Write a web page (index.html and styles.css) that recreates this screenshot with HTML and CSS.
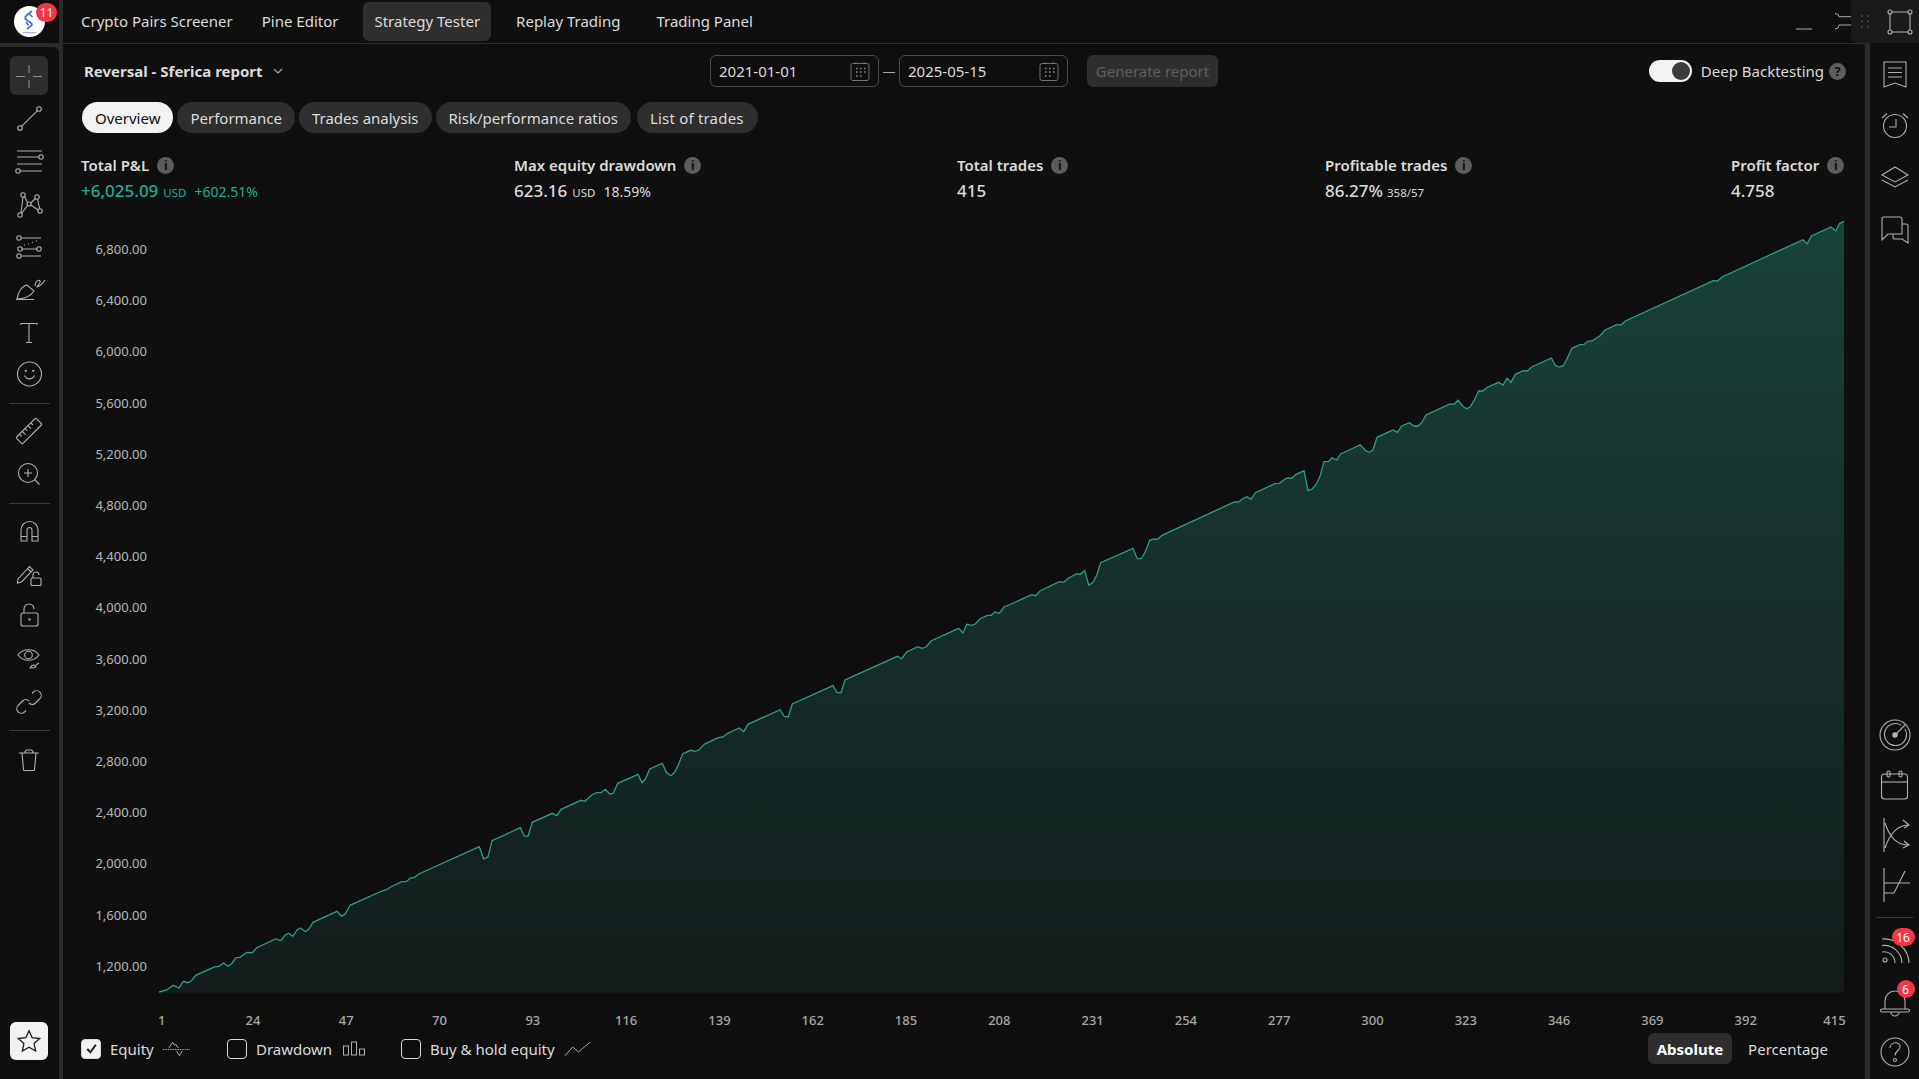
FILE: index.html
```html
<!DOCTYPE html>
<html lang="en">
<head>
  <meta charset="UTF-8" />
  <title>Strategy Tester</title>
  <link rel="stylesheet" href="styles.css">
</head>
<body>
<div class="app">

  <!-- Left drawing tools -->
  <aside class="left-col">
    <div class="logo-box">
      <svg class="logo" viewBox="0 0 31 31">
        <circle cx="15.5" cy="15.5" r="15.5" fill="#fff"/>
        <path d="M18 5 L12 10 Q10.500 12 12 13.500 L17 17 Q18.500 18.500 17 20 L13 23" fill="none" stroke="#4a7fd0" stroke-width="2"/>
        <path d="M15 7.500 L18.500 11 M12 16 L14.500 19.500" fill="none" stroke="#7b4fc4" stroke-width="1.500"/>
        <rect x="9" y="26" width="13" height="1.200" fill="#9fb0e6"/>
      </svg>
      <span class="count-badge logo-badge">11</span>
    </div>
    <nav class="tools">
      <button class="tool tool-active"><svg class="ico" viewBox="0 0 28 28"><path d="M14 3v8M14 18v8M1 14.500h9M18 14.500h9"/></svg></button>
      <button class="tool"><svg class="ico" viewBox="0 0 28 28"><circle cx="5" cy="24" r="2.300"/><circle cx="24" cy="5" r="2.300"/><path d="M6.800 22.200 22.200 6.800"/></svg></button>
      <button class="tool"><svg class="ico" viewBox="0 0 28 28"><path d="M2 4h25M2 10h22M2 17h25M5 24h22"/><circle cx="26" cy="10" r="2.200"/><circle cx="3" cy="24" r="2.200"/></svg></button>
      <button class="tool"><svg class="ico" viewBox="0 0 28 28"><circle cx="8" cy="5" r="2.200"/><circle cx="22" cy="7" r="2.200"/><circle cx="5" cy="25" r="2.200"/><circle cx="25" cy="21" r="2.200"/><circle cx="14" cy="14" r="2"/><path d="M8 7 6 23M6.500 23.500 12.500 15.500M9.500 6.500 12.500 12.500M15.800 13 20.500 8.500M22.500 9 24.700 19M15.800 15 23.300 20"/></svg></button>
      <button class="tool"><svg class="ico" viewBox="0 0 28 28"><circle cx="4" cy="6" r="2.200"/><circle cx="5" cy="17" r="2.200"/><circle cx="24" cy="17" r="2.200"/><circle cx="4" cy="24" r="2.200"/><path d="M6.500 6H26M7 17h15M6.500 24H26"/><path d="M9 13l1-.3M13 12l1-.3M17 10.500l1-.3M21 9l1-.3"/></svg></button>
      <button class="tool"><svg class="ico" viewBox="0 0 28 28"><path d="M2 24C3 17 7 11 12 10l7 6c-3 5-10 8-17 8zM1 24.500h18"/><path d="M20 11c0-5 4-7 5-5 1 2-3 5-3 6 4-1 6-4 8-7"/></svg></button>
      <button class="tool"><svg class="ico" viewBox="0 0 28 28"><path d="M6 7V5.500h16V7M14 5.500v19M11 24.500h6"/></svg></button>
      <button class="tool"><svg class="ico" viewBox="0 0 28 28"><circle cx="14.500" cy="14" r="12"/><path d="M9.500 15.500c2 4.500 8 4.500 10 0"/><circle cx="10.800" cy="10.800" r=".6"/><circle cx="18.200" cy="10.800" r=".6"/></svg></button>
      <hr class="tool-sep">
      <button class="tool"><svg class="ico" viewBox="0 0 28 28"><g transform="rotate(-45 14 14)"><rect x="0" y="9.500" width="28" height="9" rx="1"/><path d="M5 9.500v3M9 9.500v4.500M13 9.500v3M17 9.500v4.500M21 9.500v3"/></g></svg></button>
      <button class="tool"><svg class="ico" viewBox="0 0 28 28"><circle cx="13" cy="13" r="9.500"/><path d="M20 20l4.500 4.500M13 9v8M9 13h8"/></svg></button>
      <hr class="tool-sep">
      <button class="tool"><svg class="ico" viewBox="0 0 28 28"><path d="M6 24V13a8.500 8.500 0 0 1 17 0v11h-6V13a2.500 2.500 0 0 0-5 0v11zM6 19.500h6M17 19.500h6"/></svg></button>
      <button class="tool"><svg class="ico" viewBox="0 0 28 28"><path d="M3 19l-.5 4 4-1L18 10l-3.500-3.500zM12.500 8.500 16 12"/><rect x="16" y="18" width="10" height="7.500" rx="1"/><path d="M18 18v-3a3 3 0 0 1 6 0"/></svg></button>
      <button class="tool"><svg class="ico" viewBox="0 0 28 28"><rect x="6" y="11" width="17" height="13" rx="2"/><path d="M9 11V7a5 5 0 0 1 10 0"/><path d="M14.500 16.500v2" stroke-width="2"/></svg></button>
      <button class="tool"><svg class="ico" viewBox="0 0 28 28"><path d="M3 10c5-7 16-7 21 0-5 7-16 7-21 0z"/><circle cx="13.500" cy="10" r="3.800"/><path d="M15 23c1-2 2-3 4-3l2 1.500c-1 1.500-3 1.500-6 1.500zM21 20l3-2"/></svg></button>
      <button class="tool"><svg class="ico" viewBox="0 0 28 28"><path d="M17 5.500l1.500-1.500a4.600 4.600 0 0 1 6.500 6.500l-4.500 4.500a4.600 4.600 0 0 1-6.500 0"/><path d="M11 22.500l-1.500 1.500a4.600 4.600 0 0 1-6.500-6.500l4.500-4.500a4.600 4.600 0 0 1 6.500 0"/></svg></button>
      <hr class="tool-sep tool-sep-low">
      <button class="tool"><svg class="ico" viewBox="0 0 28 28"><path d="M4 6h20M7 6l1.500 16.500a1 1 0 0 0 1 1h9a1 1 0 0 0 1-1L21 6M10 6q0-3 2-3h4q2 0 2 3"/></svg></button>
      <button class="star-btn"><svg class="star" viewBox="0 0 24 24"><path d="M12 2.500l2.900 6.400 7 .8-5.200 4.700 1.400 6.900-6.100-3.500-6.100 3.500 1.400-6.900L2.100 9.700l7-.8z"/></svg></button>
    </nav>
  </aside>
  <div class="gutter"></div>

  <!-- Strategy tester panel -->
  <main class="main">
    <header class="topbar">
      <a class="tab tab-screener">Crypto Pairs Screener</a>
      <a class="tab">Pine Editor</a>
      <a class="tab tab-current">Strategy Tester</a>
      <a class="tab tab-replay">Replay Trading</a>
      <a class="tab tab-panel">Trading Panel</a>
      <svg class="win-min" viewBox="0 0 60 20"><path d="M1 18h16M40 2.500q4 0 4 3.200h14M58 14H44q0 4-4 4"/></svg>
    </header>

    <div class="content">
      <div class="report-head">
        <div class="report-title">Reversal - Sferica report <svg class="chev" viewBox="0 0 10 6"><path d="M1 1l4 4 4-4"/></svg></div>
        <label class="date-box">2021-01-01
          <svg class="cal" viewBox="0 0 20 20"><rect x="1" y="2.500" width="18" height="17" rx="2"/><path d="M6 1v2M14 1v2"/><path class="cal-dots" d="M6 7.500h1.500M10 7.500h1.500M14 7.500h1.500M6 11h1.500M10 11h1.500M14 11h1.500M6 15h1.500M10 15h1.500"/></svg>
        </label>
        <span class="dash">—</span>
        <label class="date-box">2025-05-15
          <svg class="cal" viewBox="0 0 20 20"><rect x="1" y="2.500" width="18" height="17" rx="2"/><path d="M6 1v2M14 1v2"/><path class="cal-dots" d="M6 7.500h1.500M10 7.500h1.500M14 7.500h1.500M6 11h1.500M10 11h1.500M14 11h1.500M6 15h1.500M10 15h1.500"/></svg>
        </label>
        <button class="gen-btn">Generate report</button>
        <div class="deep">
          <span class="toggle"><span class="knob"></span></span>
          <span>Deep Backtesting</span>
          <span class="hint">?</span>
        </div>
      </div>

      <div class="pills">
        <span class="pill pill-on">Overview</span>
        <span class="pill">Performance</span>
        <span class="pill">Trades analysis</span>
        <span class="pill">Risk/performance ratios</span>
        <span class="pill pill-last">List of trades</span>
      </div>

      <div class="stats">
        <div>
          <div class="stat-label">Total P&amp;L <span class="hint">i</span></div>
          <div class="stat-value green">+6,025.09 <small>USD</small> <em>+602.51%</em></div>
        </div>
        <div>
          <div class="stat-label">Max equity drawdown <span class="hint">i</span></div>
          <div class="stat-value">623.16 <small>USD</small> <em>18.59%</em></div>
        </div>
        <div>
          <div class="stat-label">Total trades <span class="hint">i</span></div>
          <div class="stat-value">415</div>
        </div>
        <div>
          <div class="stat-label">Profitable trades <span class="hint">i</span></div>
          <div class="stat-value">86.27% <small class="ratio">358/57</small></div>
        </div>
        <div>
          <div class="stat-label">Profit factor <span class="hint">i</span></div>
          <div class="stat-value">4.758</div>
        </div>
      </div>

      <div class="chart">
        <div class="y-axis">
          <span>6,800.00</span><span>6,400.00</span><span>6,000.00</span><span>5,600.00</span><span>5,200.00</span>
          <span>4,800.00</span><span>4,400.00</span><span>4,000.00</span><span>3,600.00</span><span>3,200.00</span>
          <span>2,800.00</span><span>2,400.00</span><span>2,000.00</span><span>1,600.00</span><span>1,200.00</span>
        </div>
        <svg class="plot" viewBox="159 215 1685 778">
          <defs>
            <linearGradient id="area" gradientUnits="userSpaceOnUse" x1="0" y1="220" x2="0" y2="993">
              <stop offset="0" stop-color="#184239"/>
              <stop offset="1" stop-color="#131c1b"/>
            </linearGradient>
          </defs>
          <path fill="url(#area)" d="M159 992 166.700 990 173.300 985.300 179 988 183.300 981.300 187.700 982.700 191 981.300 195.700 975.300 215 966.700 219 966.300 223.700 963 228 966.300 231.700 963.700 236 957.700 240 957.300 246.700 952.300 252.300 952.700 256.700 947.700 275.700 939 280.700 940.700 285 935.300 288.700 933.300 292.700 936.300 297.300 929.700 300.700 928 305.300 931.700 308.700 929.300 313 922.300 337 911.300 341.700 916.300 345.300 913.700 350 905.300 381.700 891 386 890 391 886.700 401.700 881.700 406.300 881.700 410.300 878 414.300 877.300 419.300 873.700 479.300 846.700 483.700 859 488 856.700 492 840.700 520.300 827.700 524.300 836 528 836.300 532.300 822.300 552.300 813.300 557 815.700 561 809.300 581 800.300 585 801.300 592 794.700 596.700 792.700 601 792.700 605.300 789.300 609.700 794 613.300 793.300 617.700 783.300 638 774.300 642 782.700 645.700 778.300 649.700 769 662.300 763.300 666.300 772 670.700 775.700 674.700 772.300 678.300 765 682.700 753.700 690.700 750.300 695 751.300 699 750 704 744.300 718.300 737.700 723 737 727.700 733.300 739.300 728 743.700 731.700 748 724.300 780 709.700 784.300 716.300 788.300 716.700 792.300 704 833 685.700 837 692.700 841 692.700 845 680 897.300 656.300 901.700 658.700 906.700 652 917.700 646.700 922 648.300 926 647 931 641 958.700 628.300 963 633 966.700 624.300 971.700 625.300 975.300 624 980 618.700 987.300 615.300 991 615.300 995 612 999.300 613.300 1004 607 1010 604.500 1031.700 594.700 1035.700 595.700 1040 591 1059.300 581.700 1063.700 582.300 1068.300 578.300 1076.300 574 1080.300 574.300 1084.700 570.700 1088.700 585 1092.700 582.700 1096.700 575.300 1100.700 562.700 1133 548.300 1137.300 558.700 1141.300 558.700 1145.300 551.700 1149.700 540.300 1153.700 539 1157.700 539.300 1162 535.300 1234.300 502 1238.700 502 1242.700 498.700 1247 496.700 1251 499.300 1255.300 492.700 1275 483.700 1279.300 483.300 1284 479.700 1287.300 478 1291.700 478.300 1296 474.300 1304 470.700 1308 490.700 1312 489 1316 484.700 1320 476.300 1324 461.700 1328.300 461.700 1332 457.700 1336.700 460 1340.700 454 1360.300 444.700 1365.300 450.300 1369 452.300 1373 450 1377 437.300 1393 430 1397.300 432.300 1401.700 426 1409.300 422.700 1414 426 1418 426 1422 422.300 1426 415 1450 404 1454 404.300 1458 400.300 1463.300 406.700 1466.700 408.700 1470.300 406.700 1474.300 400 1478.700 391 1482.700 391 1488 387 1498.700 382.300 1503 385 1507 378.300 1511 382.300 1515.300 374.300 1523.300 370.700 1527.300 371 1531.700 367 1551.300 358 1555.700 365.700 1559.300 367 1563.300 365.700 1567.300 358.300 1572 348.300 1580 344.700 1584 344.300 1588 341.300 1592.300 340.700 1600 335.700 1605 330 1616.700 324.700 1621 325 1625.300 321 1713.300 280.700 1717.700 281 1722 277 1803 239.700 1807 244 1811.300 236 1831 227 1835.700 231 1839.700 223.300 1844 221.300V993H159Z"/>
          <path class="equity" d="M159 992 166.700 990 173.300 985.300 179 988 183.300 981.300 187.700 982.700 191 981.300 195.700 975.300 215 966.700 219 966.300 223.700 963 228 966.300 231.700 963.700 236 957.700 240 957.300 246.700 952.300 252.300 952.700 256.700 947.700 275.700 939 280.700 940.700 285 935.300 288.700 933.300 292.700 936.300 297.300 929.700 300.700 928 305.300 931.700 308.700 929.300 313 922.300 337 911.300 341.700 916.300 345.300 913.700 350 905.300 381.700 891 386 890 391 886.700 401.700 881.700 406.300 881.700 410.300 878 414.300 877.300 419.300 873.700 479.300 846.700 483.700 859 488 856.700 492 840.700 520.300 827.700 524.300 836 528 836.300 532.300 822.300 552.300 813.300 557 815.700 561 809.300 581 800.300 585 801.300 592 794.700 596.700 792.700 601 792.700 605.300 789.300 609.700 794 613.300 793.300 617.700 783.300 638 774.300 642 782.700 645.700 778.300 649.700 769 662.300 763.300 666.300 772 670.700 775.700 674.700 772.300 678.300 765 682.700 753.700 690.700 750.300 695 751.300 699 750 704 744.300 718.300 737.700 723 737 727.700 733.300 739.300 728 743.700 731.700 748 724.300 780 709.700 784.300 716.300 788.300 716.700 792.300 704 833 685.700 837 692.700 841 692.700 845 680 897.300 656.300 901.700 658.700 906.700 652 917.700 646.700 922 648.300 926 647 931 641 958.700 628.300 963 633 966.700 624.300 971.700 625.300 975.300 624 980 618.700 987.300 615.300 991 615.300 995 612 999.300 613.300 1004 607 1010 604.500 1031.700 594.700 1035.700 595.700 1040 591 1059.300 581.700 1063.700 582.300 1068.300 578.300 1076.300 574 1080.300 574.300 1084.700 570.700 1088.700 585 1092.700 582.700 1096.700 575.300 1100.700 562.700 1133 548.300 1137.300 558.700 1141.300 558.700 1145.300 551.700 1149.700 540.300 1153.700 539 1157.700 539.300 1162 535.300 1234.300 502 1238.700 502 1242.700 498.700 1247 496.700 1251 499.300 1255.300 492.700 1275 483.700 1279.300 483.300 1284 479.700 1287.300 478 1291.700 478.300 1296 474.300 1304 470.700 1308 490.700 1312 489 1316 484.700 1320 476.300 1324 461.700 1328.300 461.700 1332 457.700 1336.700 460 1340.700 454 1360.300 444.700 1365.300 450.300 1369 452.300 1373 450 1377 437.300 1393 430 1397.300 432.300 1401.700 426 1409.300 422.700 1414 426 1418 426 1422 422.300 1426 415 1450 404 1454 404.300 1458 400.300 1463.300 406.700 1466.700 408.700 1470.300 406.700 1474.300 400 1478.700 391 1482.700 391 1488 387 1498.700 382.300 1503 385 1507 378.300 1511 382.300 1515.300 374.300 1523.300 370.700 1527.300 371 1531.700 367 1551.300 358 1555.700 365.700 1559.300 367 1563.300 365.700 1567.300 358.300 1572 348.300 1580 344.700 1584 344.300 1588 341.300 1592.300 340.700 1600 335.700 1605 330 1616.700 324.700 1621 325 1625.300 321 1713.300 280.700 1717.700 281 1722 277 1803 239.700 1807 244 1811.300 236 1831 227 1835.700 231 1839.700 223.300 1844 221.300"/>
        </svg>
      </div>

      <div class="x-axis">
        <span class="x-first">1</span><span>24</span><span>47</span><span>70</span><span>93</span><span>116</span>
        <span>139</span><span>162</span><span>185</span><span>208</span><span>231</span><span>254</span>
        <span>277</span><span>300</span><span>323</span><span>346</span><span>369</span><span>392</span>
        <span class="x-last">415</span>
      </div>

      <div class="legend">
        <div class="legend-item legend-equity">
          <span class="check check-on"><svg viewBox="0 0 12 12"><path d="M2 6.500l3 3 5-7"/></svg></span>
          <span>Equity</span>
          <svg class="mini" viewBox="0 0 28 16"><path d="M0 8.500h28" stroke-dasharray="1.500 1"/><path d="M6 7 10 1l2 3 1-1 3 4M14 10l3 5 3-5"/></svg>
        </div>
        <div class="legend-item legend-draw">
          <span class="check"></span>
          <span>Drawdown</span>
          <svg class="mini" viewBox="0 0 24 16"><rect x="1" y="5" width="5" height="9"/><rect x="9" y="1" width="5" height="13"/><rect x="17" y="8" width="5" height="6"/></svg>
        </div>
        <div class="legend-item">
          <span class="check"></span>
          <span>Buy &amp; hold equity</span>
          <svg class="mini" viewBox="0 0 28 16"><path d="M1 15 9 6l6 5L27 1"/></svg>
        </div>
        <div class="seg">
          <span class="seg-btn seg-on">Absolute</span>
          <span class="seg-btn">Percentage</span>
        </div>
      </div>
    </div>
  </main>
  <div class="gutter gutter-right"></div>

  <!-- Right widget bar -->
  <aside class="right-col">
    <div class="side-group">
      <button class="side"><svg class="ico-lg" viewBox="0 0 32 32"><path d="M5 4h22v25l-11-4-11 4zM9 10h14M9 14.500h14M9 19h14"/></svg></button>
      <button class="side"><svg class="ico-lg" viewBox="0 0 32 32"><circle cx="16" cy="16" r="11.500"/><path d="M17 9v8h-7M3 8l5-4.500M29 8l-5-4.500"/></svg></button>
      <button class="side"><svg class="ico-lg" viewBox="0 0 32 32"><path d="M16 5l13 8-13 7-13-7zM3 18l13 7 13-7"/></svg></button>
      <button class="side"><svg class="ico-lg" viewBox="0 0 32 32"><path d="M3 26V5a2 2 0 0 1 2-2h16a2 2 0 0 1 2 2v15H9zM23 10h4a2 2 0 0 1 2 2v17l-6-4h-7a2 2 0 0 1-2-2v-3"/></svg></button>
    </div>
    <div class="side-group side-low">
      <button class="side"><svg class="ico-lg" viewBox="0 0 32 32"><circle cx="16" cy="16" r="15"/><path d="M26 10a11 11 0 1 1-4-4"/><circle cx="16" cy="16" r="2.200" fill="currentColor"/><path d="M16 16 27 5"/></svg></button>
      <button class="side"><svg class="ico-lg" viewBox="0 0 32 32"><rect x="2.500" y="5" width="26" height="25" rx="3"/><path d="M2.500 13h26"/><rect x="8" y="2" width="3" height="6" rx="1.500"/><rect x="20" y="2" width="3" height="6" rx="1.500"/></svg></button>
      <button class="side"><svg class="ico-lg ico-tall" viewBox="0 0 32 36"><path d="M5 1v34M6 6c5 15 12 22 24 22M6 31c5-15 12-23 24-23M24 3l6 5-5 3M25 24l5 4-6 3"/></svg></button>
      <button class="side"><svg class="ico-lg ico-tall" viewBox="0 0 32 36"><path d="M5 1v34M5 26h10L26 4M5 16h26"/></svg></button>
      <hr class="side-sep">
      <button class="side"><svg class="ico-lg" viewBox="0 0 32 32"><circle cx="6" cy="24" r="2"/><path d="M3 16a11 11 0 0 1 13 11M3 9.500a18 18 0 0 1 20 17.500M3 3a25 25 0 0 1 27 24"/></svg><span class="count-badge rss-badge">16</span></button>
      <button class="side"><svg class="ico-lg" viewBox="0 0 32 32"><path d="M6 23v-8a10 10 0 0 1 20 0v8M3 23h26a1.500 1.500 0 0 1 0 3H3a1.500 1.500 0 0 1 0-3zM12 26a4 4 0 0 0 8 0"/></svg><span class="count-badge bell-badge">6</span></button>
      <button class="side"><svg class="ico-lg" viewBox="0 0 32 32"><circle cx="16" cy="16" r="14"/><path d="M11 12c0-7 11-7 10-.5-.5 3-5 3.500-5 8"/><circle cx="16" cy="24" r="1.500"/></svg></button>
    </div>
  </aside>

  <!-- Floating layout handle -->
  <div class="handle">
    <svg class="handle-dots" viewBox="0 0 10 14"><path d="M1 1h1.500M7 1h1.500M1 6.500h1.500M7 6.500h1.500M1 12h1.500M7 12h1.500"/></svg>
    <svg class="handle-box" viewBox="0 0 26 26"><path d="M5 3h16M5 23h16M3 5v16M23 5v16"/><circle cx="3" cy="3" r="2"/><circle cx="23" cy="3" r="2"/><circle cx="3" cy="23" r="2"/><circle cx="23" cy="23" r="2"/></svg>
  </div>
</div>
</body>
</html>
```

FILE: styles.css
```css
* { margin: 0; padding: 0; box-sizing: border-box; }
html, body { height: 100%; }
body {
  font-family: "Noto Sans", "Open Sans", sans-serif;
  font-size: 15px;
  background: #0f0f0f;
  color: #dbdbdb;
  overflow: hidden;
}
button { font: inherit; border: 0; background: none; color: inherit; }

.app {
  position: relative;
  display: flex;
  height: 1079px;
}

/* left tools */
.left-col {
  width: 59px;
  display: flex;
  flex-direction: column;
  background: #2a2a2a;
  flex-shrink: 0;
}
.logo-box {
  position: relative;
  height: 47px;
  background: #0f0f0f;
  border-bottom: 4px solid #2a2a2a;
  padding: 6px 0 0 14px;
}
.logo { width: 31px; height: 31px; display: block; }
.count-badge {
  position: absolute;
  display: flex;
  align-items: center;
  justify-content: center;
  background: #f23645;
  color: #fff;
  font-size: 12px;
  border-radius: 10px;
  height: 19px;
  min-width: 21px;
  padding: 0 3px;
}
.logo-badge { left: 36px; top: 3px; }
.tools {
  flex: 1;
  background: #0f0f0f;
  border-radius: 0 6px 0 0;
  padding: 9px 1px 0 0;
  display: flex;
  flex-direction: column;
  align-items: center;
  gap: 3.7px;
}
.tool {
  width: 38px;
  height: 39px;
  flex-shrink: 0;
  border-radius: 6px;
  color: #b0b0b0;
  display: flex;
  align-items: center;
  justify-content: center;
}
.tool-active { background: #2e2e2e; color: #8f8f8f; }
.ico { width: 28px; height: 28px; fill: none; stroke: currentColor; stroke-width: 1.1; overflow: visible; }
.tool-sep {
  width: 41px;
  border: 0;
  border-top: 1px solid #3a3a3a;
  margin: 5.4px 0 4.2px;
}
.tool-sep-low { margin-bottom: 6.2px; }
.star-btn {
  width: 38px;
  height: 38px;
  margin-top: auto;
  margin-bottom: 19px;
  border-radius: 6px;
  background: #f2f2f2;
  display: flex;
  align-items: center;
  justify-content: center;
}
.star { width: 26px; height: 26px; fill: none; stroke: #1f1f1f; stroke-width: 1.2; }

.gutter { width: 4px; flex-shrink: 0; background: #2a2a2a; }
.gutter-right { width: 5px; }

/* main panel */
.main { flex: 1; min-width: 0; display: flex; flex-direction: column; }
.topbar {
  height: 44px;
  border-bottom: 1px solid #2e2e2e;
  display: flex;
  align-items: center;
  padding-left: 7px;
  flex-shrink: 0;
  position: relative;
}
.tab {
  height: 39px;
  padding: 0 11px;
  display: flex;
  align-items: center;
  border-radius: 6px;
  margin-top: -1px;
}
.tab-screener { margin-right: 7px; }
.tab-current { background: #2e2e2e; margin-left: 14px; }
.tab-replay { margin-left: 14px; }
.tab-panel { margin-left: 14px; }
.win-min {
  position: absolute;
  left: 1732px;
  top: 11px;
  width: 60px;
  height: 20px;
  fill: none;
  stroke: #a8a8a8;
  stroke-width: 1;
}

.content { padding: 11px 19px 0 18px; }
.report-head { display: flex; align-items: center; height: 32px; }
.report-title {
  width: 629px;
  padding-left: 3px;
  font-weight: 700;
  display: flex;
  align-items: center;
  gap: 10px;
}
.chev { width: 10px; height: 6px; fill: none; stroke: #a8a8a8; stroke-width: 1.1; }
.date-box {
  width: 169px;
  height: 32px;
  border: 1px solid #4a4a4a;
  border-radius: 6px;
  padding: 0 8px;
  display: flex;
  align-items: center;
  justify-content: space-between;
}
.cal { width: 20px; height: 20px; fill: none; stroke: #707070; stroke-width: 1; }
.cal-dots { stroke-width: 1.500; stroke: #8a8a8a; }
.dash { width: 20px; text-align: center; color: #a8a8a8; font-size: 13px; }
.gen-btn {
  margin-left: 19px;
  width: 131px;
  height: 32px;
  border-radius: 6px;
  background: #2e2e2e;
  color: #5e5e5e;
}
.deep { margin-left: auto; display: flex; align-items: center; }
.toggle {
  width: 43px;
  height: 22px;
  border-radius: 11px;
  background: #f2f2f2;
  display: flex;
  align-items: center;
  justify-content: flex-end;
  padding-right: 2px;
  margin-right: 9px;
}
.knob { width: 18px; height: 18px; border-radius: 50%; background: #3d3d3d; }
.hint {
  display: inline-flex;
  align-items: center;
  justify-content: center;
  width: 17px;
  height: 17px;
  border-radius: 50%;
  background: #5d5d5d;
  color: #0f0f0f;
  font-size: 12px;
  font-weight: 700;
  margin-left: 5px;
}

.pills { display: flex; gap: 4px; margin: 15px 0 0 1px; }
.pill {
  height: 31px;
  padding: 0 13px;
  border-radius: 16px;
  background: #2e2e2e;
  display: flex;
  align-items: center;
}
.pill-on { background: #f2f2f2; color: #0f0f0f; }
.pill-last { margin-left: 2px; padding: 0 14px 0 13px; letter-spacing: .2px; }

.stats {
  display: grid;
  grid-template-columns: 433px 443px 368px 406px auto;
  margin-top: 22px;
}
.stat-label { display: flex; align-items: center; height: 20px; font-weight: 600; }
.stat-label .hint { margin-left: 8px; }
.stat-value {
  margin-top: 5px;
  height: 22px;
  font-size: 17px;
  line-height: 22px;
  font-weight: 500;
  display: flex;
  align-items: baseline;
  gap: 5px;
}
.stat-value small { font-size: 11.5px; font-weight: 400; }
.stat-value em { font-style: normal; font-size: 14px; font-weight: 400; margin-left: 3px; }
.stat-value .ratio { margin-left: -1px; }
.green { color: #22ab94; }

.chart { display: flex; margin-top: 13px; height: 778px; }
.y-axis {
  width: 66px;
  padding: 26px 0 19px;
  display: flex;
  flex-direction: column;
  justify-content: space-between;
  align-items: flex-end;
  font-size: 13px;
  line-height: 16px;
  color: #b8b8b8;
}
.plot { width: 1685px; height: 778px; margin-left: 12px; flex-shrink: 0; display: block; }
.equity { fill: none; stroke: #2b9d85; stroke-width: 1.3; }

.x-axis {
  display: grid;
  grid-template-columns: repeat(19, 93.3px);
  margin: 18px 0 0 32px;
  height: 18px;
  font-size: 13px;
  line-height: 18px;
  font-weight: 500;
  text-align: center;
  color: #a8a8a8;
  white-space: nowrap;
}
.x-first { margin-left: 4px; }
.x-last { margin-left: -9px; }

.legend { display: flex; align-items: center; height: 31px; margin-top: 4px; }
.legend-item { display: flex; align-items: center; gap: 9px; }
.legend-equity { width: 146px; }
.legend-draw { width: 174px; }
.check {
  width: 20px;
  height: 20px;
  border: 1px solid #d8d8d8;
  border-radius: 4px;
  display: flex;
  align-items: center;
  justify-content: center;
}
.check svg { width: 13px; height: 13px; fill: none; stroke: #1f1f1f; stroke-width: 1.8; }
.check-on { background: #f2f2f2; }
.mini { width: 27px; height: 16px; fill: none; stroke: #b0b0b0; stroke-width: 1; }
.seg { margin-left: auto; display: flex; align-items: center; }
.seg-btn {
  height: 31px;
  padding: 0 18px 0 16px;
  display: flex;
  align-items: center;
  border-radius: 6px;
}
.seg-on { background: #2e2e2e; color: #fff; font-weight: 700; padding: 0 9px; }

/* right bar */
.right-col {
  width: 49px;
  flex-shrink: 0;
  display: flex;
  flex-direction: column;
  justify-content: space-between;
  padding: 57px 0 10px;
  color: #b0b0b0;
}
.side-group { display: flex; flex-direction: column; align-items: center; gap: 18px; }
.side-low { gap: 16px; }
.side {
  width: 34px;
  height: 34px;
  display: flex;
  align-items: center;
  justify-content: center;
  position: relative;
}
.ico-lg { width: 32px; height: 32px; fill: none; stroke: currentColor; stroke-width: 1.1; }
.ico-tall { height: 36px; }
.side-sep { width: 37px; border: 0; border-top: 1px solid #3a3a3a; margin: -1px 0 1px; }
.rss-badge { left: 14px; top: -7px; height: 18px; min-width: 23px; }
.bell-badge { left: 19px; top: -5px; min-width: 18px; height: 18px; padding: 0; }

/* floating corner */
.handle {
  position: absolute;
  right: 0;
  top: 0;
  width: 68px;
  height: 43px;
  background: #1a1a1a;
  border-radius: 0 0 0 8px;
  display: flex;
  align-items: center;
  padding-left: 9px;
  gap: 17px;
}
.handle-dots { width: 10px; height: 14px; fill: none; stroke: #5a5a5a; stroke-width: 1.3; }
.handle-box { width: 26px; height: 26px; fill: none; stroke: #b0b0b0; stroke-width: 1.1; }
```
